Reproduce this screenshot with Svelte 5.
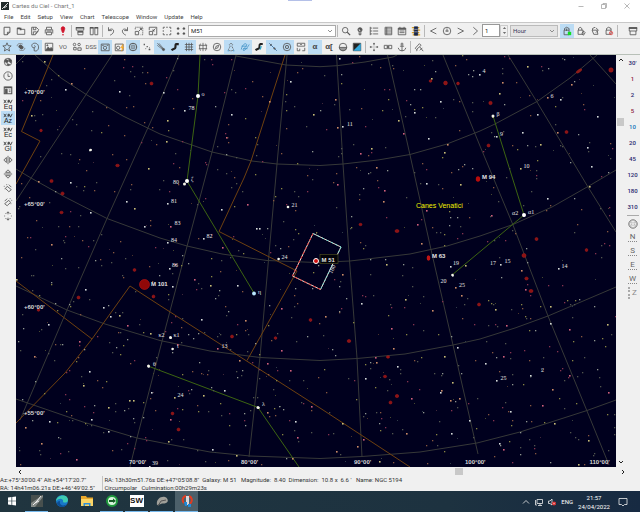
<script>
  const menus = ['File', 'Edit', 'Setup', 'View', 'Chart', 'Telescope', 'Window', 'Update', 'Help'];

  // Line icons on a 12 x 12 grid, drawn with the current colour.
  const icons = {
    page: '<path d="M2.5 1.5h7v6l-3 3h-4zM9.5 7.5h-3v3" stroke-width="1.1"/>',
    open: '<path d="M1.5 10V2.5h3.5l1 1.5h4.5v6z"/><path d="M1.5 3h4v2" stroke-width="2"/>',
    save: '<path d="M2 1.5h5.500l3 3-4 6H2zM4 1.500v3h3v-3M4 10.500v-3.500h4M6 10l4-4"/>',
    print: '<path d="M3 4V1.500h6V4M1.500 9V4.500h9V9M3 7.500h6v3H3zM3 6h6"/>',
    alert: '<path d="M6 1C3.500 1 3.500 3.500 4.500 5.500 5 7 5 8 6 8s1-1 1.500-2.500C8.500 3.500 8.500 1 6 1z" fill="#d0142c" stroke="#d0142c"/><circle cx="6" cy="10.500" r="1" fill="#d0142c" stroke="none"/>',
    tileh: '<path d="M1.500 2v3h9V2zM3.500 7v3.500h6V7z"/><path d="M1 2h10M3 7h7" stroke-width="1.800"/>',
    tilev: '<path d="M1.500 2v8.500H5V2zM7 2v8.500h3.500V2z"/><path d="M1 2h4.500M6.500 2H11" stroke-width="1.800"/>',
    undo: '<path d="M3 1.500v4h4M3 5.500C6 2 10 4 9 7c-.500 2-2 3-4 4"/>',
    redo: '<path d="M9 1.500v4H5M9 5.500C6 2 2 4 3 7c.500 2 2 3 4 4"/>',
    zoomin: '<path d="M1.500 4V1.500h9v9H8" stroke-dasharray="1.500 1"/><path d="M1.500 6.500h4v4h-4zM6 6l3-3M7 3h2v2"/>',
    zoomout: '<path d="M1.500 5V1.500h9v9H7"/><path d="M1.500 6.500h4v4h-4zM9 3L6 6M6 4v2h2"/>',
    select: '<path d="M3.500 1.500h-2v2M8.500 1.500h2v2M1.500 8.500v2h2M10.500 8.500v2h-2M5 1.500h2M5 10.500h2M1.500 5v2M10.500 5v2"/>',
    field: '<path d="M1 3h3M2.500 1.500v3M8 3h3M9.500 1.500v3M1 9h3M2.500 7.500v3M8 9h3M9.500 7.500v3" stroke-width="1.500"/>',
    search: '<circle cx="5" cy="5" r="3.300"/><path d="M7.500 7.500L11 11" stroke-width="1.400"/>',
    bulb: '<circle cx="6" cy="4.500" r="2.500" fill="currentColor"/><path d="M5 7.500v3h2v-3" stroke-width="1.200"/><path d="M5 4l1 2" stroke="#fff"/>',
    tree: '<path d="M1.500 1v10M1.500 2.500h2M4.500 2.500H11M5 6h6M1.500 6H4M1.500 9.500H4M5 9.500h6"/>',
    list: '<path d="M2.500 1.500h8v9h-8zM2.500 3.500h8M2.500 6h8M2.500 8.500h8M4.500 1.500v9"/>',
    calendar: '<path d="M1.500 2.500h9v8h-9zM3.500 1v2M8.500 1v2M3 6h6M3 8h6"/><path d="M1.500 3.500h9" stroke-width="2"/>',
    obs: '<path d="M1 2h9M2 5h9M1 8h9M2 10.500h9" stroke="#e0a426" stroke-width="1.500"/><path d="M4 1h4v10H4z" fill="#17264d" stroke="#17264d"/><path d="M4 4h4M4 7h4" stroke="#aaa"/>',
    left: '<path d="M10 2.500L3 6l7 3.500"/>',
    right: '<path d="M2 2.500L9 6 2 9.500"/>',
    right2: '<path d="M4 1.500l5 4.500-5 4.500"/>',
    now: '<circle cx="6" cy="6" r="4.500"/><path d="M6 3v4M4 6h4"/>',
    mouseg: '<path d="M2.500 5h6v5.500h-6zM3 5V3l2.500-1.500L8.500 3v2M5.500 3v3"/><path d="M7 7h4v4H7z" fill="#10e020" stroke="none"/>',
    mouse1: '<path d="M2.500 5h6v5h-6zM3 5V3l2-1.500L7 3v2M9 6l2 2-2 3-2-2z"/>',
    mouse2: '<path d="M2.500 5h6l1 5h-5zM3 5V3l3-1.500M7 2l3 3-3 3"/>',
    mouse3: '<path d="M2.500 5h6v5h-6zM3 5V3l2.500-1.500L8.500 3v2"/><circle cx="8.500" cy="8.500" r="2" stroke="#e05050"/><path d="M7.500 9.500l2-2" stroke="#e05050"/>',
    win: '<path d="M1.500 2v4h9V2zM2.500 6v4.500h7V6"/><path d="M1 2.500h10" stroke-width="2"/>',
    star: '<path d="M6 1l1.400 3.400 3.600.300-2.800 2.400.900 3.700L6 8.800 2.900 10.800l.900-3.700L1 4.700l3.600-.300z"/>',
    galaxy: '<ellipse cx="6" cy="6" rx="2.800" ry="2" transform="rotate(35 6 6)" fill="currentColor"/><path d="M1.500 5C1 2 5 1 8 2.500M10.500 7c.500 3-3.500 4-6.500 2.500" stroke="#777"/>',
    nebula: '<path d="M5 10.500C9 12 11 8 10 4.500 9 1 4 .500 2.500 3 1.500 5 2.500 7 5 7c2-.500 1.500-3 0-2.500M5 7v3.500"/>',
    image: '<path d="M1.500 1.500h9v9h-9z"/><path d="M2 10l3-4 2 2 1.500-1.500L10 8v2z" fill="currentColor"/><circle cx="4" cy="4" r=".700" fill="currentColor"/>',
    shapes: '<circle cx="3" cy="3" r="1.500"/><circle cx="8.500" cy="3" r="1.500"/><path d="M2 6.500h3v3H2zM7 7h4v3H7z"/>',
    pic: '<path d="M1.500 2.500h9.500v8H1.500z"/><circle cx="6" cy="7" r="2"/><path d="M2.500 4h2M8 4h2"/>',
    picflash: '<path d="M1.500 2.500h9.500v8H1.500z"/><circle cx="5" cy="7" r="2"/><path d="M10.500 3L8 7h2l-1 4 3-5h-2l1-3z" fill="#f5a623" stroke="#f5a623" stroke-width=".500"/>',
    rings: '<circle cx="6" cy="6" r="4.500" stroke-width="1.200"/><circle cx="6" cy="6" r="2.300" stroke-width=".800"/><circle cx="6" cy="6" r=".800" fill="currentColor" stroke="none"/>',
    dots: '<path d="M2 3h1.500M5.500 5.500H7M8 9h2" stroke-width="1.600"/><path d="M4 8h1M8.500 7h1" stroke-width="1"/>',
    comet: '<path d="M1.500 1.500l7 7M3.500 1.500L9 8M1.500 4L8 9" stroke-width=".800"/><circle cx="9" cy="9" r="1.300" fill="currentColor"/>',
    milky: '<path d="M10.500 2.500H7.500c-2 1 0 3-1.500 5-1 1-3 1-4 2.500" stroke="#222" stroke-width="2.600"/>',
    milkyb: '<path d="M10.500 2.500H7.500c-2 1 0 3-1.500 5-1 1-3 1-4 2.500" stroke="#222" stroke-width="2.400"/><path d="M9 5c-1.500 1 0 2-2 4" stroke="#28a5c7" stroke-width="1.500"/>',
    grid: '<path d="M3 1v10M6 1v10M9 1v10M1 3h10M1 6h10M1 9h10" stroke-width=".900"/>',
    globe: '<path d="M6 1v10M3 2C1.500 5 1.500 7 3 10.500M9 2c1.500 3 1.500 5 0 8.500M1 4h10M1 8h10" stroke-width=".900"/>',
    compass: '<circle cx="6" cy="6" r="4.500"/><path d="M8 4L5 5 4 8l3-1z"/>',
    figure: '<path d="M6 1.500L8 3 7 5 9 9 7.500 10.500h-3L3 9l2-4-1-2z" stroke-dasharray="1.300 .700"/><path d="M2 10.500h1.500M8.500 10.500H10" stroke="#2580b5"/>',
    draw: '<path d="M1.500 9C3 2 7 1 8 3S2 9 4 10s6-5 7-7M2 5h6M4 8h5" stroke="#4192c7"/>',
    conline: '<path d="M1.500 1.500l9 9" stroke="#369"/><path d="M3 3l1 1M7 7l1.500 1.500" stroke-width="2.200"/>',
    target: '<circle cx="6" cy="6" r="4.500"/><circle cx="6" cy="6" r="2"/><path d="M6 5.500v1"/>',
    frames: '<path d="M1.500 5V1.500h9V5zM1.500 7v3.500h3V8M10.500 7v3.500h-3M5 3h2"/>',
    horizon: '<circle cx="6" cy="6" r="4.500"/><path d="M1.500 6.500h9C10 9 8 10.500 6 10.500S2 9 1.500 6.500z" fill="#999"/>',
    night: '<path d="M1.500 1.500h9v9h-9z" fill="#222"/><path d="M10.500 1.500v9h-9z" fill="#35a9dc" stroke="none"/>',
    center: '<path d="M6 1v3M6 8v3M1 6h3M8 6h3M5 2h2M5 10h2M2 5v2M10 5v2M5.500 6h1"/>',
    link: '<path d="M1.500 4h4v4h-4zM6.500 4h4v4h-4zM4 6h4"/>',
    anchor: '<circle cx="6" cy="2.500" r="1.200"/><path d="M6 4v7M3.500 5h5M1.500 7c.500 3 3 3.500 4.500 3.500S10 10 10.500 7"/>',
    scope: '<path d="M1.500 7.500l5-5.500 2 2-5.500 5zM4 9l-1 2M7 6l4 5M7 10l3-3"/>',
    world: '<circle cx="6" cy="6" r="4.500"/><path d="M3 3l3 1v2L4 7 2 5zM7 2l3 2-1 3-2-2zM5 8l3 1-2 1z" fill="currentColor"/>',
    clock: '<circle cx="6" cy="6" r="5"/><path d="M6 3v3.500h2.500"/>',
    panel: '<path d="M1.500 2.500h9v8h-9z" stroke-width="1.300"/><path d="M2 3h8" stroke-width="1.800"/><path d="M3 5h2v5H3z" fill="currentColor"/><path d="M7 6h2M7 8h2"/>',
    fliph: '<path d="M6 1v10M4 3L1 6l3 3zM8 3l3 3-3 3z"/>',
    flipv: '<path d="M1 6h10M3 4l3-3 3 3zM3 8l3 3 3-3z"/>',
    rotl: '<path d="M5 4l5 4-3 2.500-4-4zM7 2l3 3" /><path d="M1 4h1M2 7h1M4 2h1"/>',
    rotr: '<path d="M7 4L2 8l3 2.500 4-4zM5 2L2 5"/><path d="M10 4h1M9 8h1M8 2h1"/>',
    rot: '<path d="M6 1v3M6 8v3M1.500 6h1M9.500 6h1M3 3h1M8 3h1M3 9h1M8 9h1M4.500 2.500L6 1l1.500 1.500M4.500 9.500L6 11l1.500-1.500"/>',
    disc: '<circle cx="6" cy="6" r="5"/><path d="M2.500 4h7M1.500 6h9M2.500 8h7M4 2v8M8 2v8" stroke="#aaa" stroke-dasharray="1 1"/>'
  };

  const bar1a = ['page', 'open', 'save', 'print', 'alert', '|', 'tileh', 'tilev', '|', 'undo', 'redo', 'zoomin', 'zoomout', 'select', 'field'];
  const bar1b = ['search', 'bulb', 'tree', 'list', 'calendar', 'obs', '|', 'left', 'now', 'right', 'right2'];
  const bar1c = ['mouseg*', 'mouse1', 'mouse2', 'mouse3', '|'];
  const bar2 = ['star*', 'galaxy*', 'nebula*', 'image', '=VO', 'shapes', '=DSS', 'pic*', 'picflash', 'rings*', 'dots', 'comet*', 'milky*', 'grid*', 'globe', 'compass', 'figure*', 'draw*', 'milkyb', 'conline*', 'target*', 'frames', '=α*', '=α[', 'horizon', 'night', '|', 'center', 'link', 'anchor', '|', 'scope'];
  const leftBar = ['world', 'clock', 'panel', '=Eq', '=Az*', '=Ec', '=Gl', 'fliph', 'flipv', 'rotl', 'rotr', 'rot'];
  const fields = ["30'", '1', '2', '5', '10', '20', '45', '120', '180', '310'];

  // Star catalogue by tile: origin, then x,y in thirds of a pixel with a
  // colour letter (upper case = brighter).
  const tiles = [
    [0, 54, '133,23Y 252,42o 370,40p 427,38g 443,55o 391,53g 428,55g 155,77g 215,88O 195,107W 138,95g 175,64y 344,80g 437,87o 358,113W 389,123g 66,139p 120,139o 94,184Y 103,185g 105,198g 126,181g 171,226g 216,195g 229,210g 272,287W 267,289w 276,173g 320,161o 303,234y 275,229g 325,213o 378,161o 401,156o 434,205o 458,220o 372,243o 424,264p 469,270o 210,300g 184,299g 237,315o 258,350o 337,300o 378,317o 445,344Y 120,306g 116,382O 63,387o 210,384W 228,397g 166,413w 254,397y 250,410g 282,410o 290,385g 342,412o 394,392o 390,407g 477,406g 380,443W 403,462Y 87,431o 147,445g 57,457g 56,464g 271,475W 210,473p 240,485g 450,500o 432,516W 450,515o 465,579p 110,500o 174,516g 208,517o 235,518g 303,541g 248,558o 280,560g 195,548p 190,558g 194,564g 155,570O 90,549p 82,551o 105,585g 264,578p 360,562o 341,596o 66,22g 372,16o 398,38p 404,67g'],
    [160, 54, '51,13w 134,15g 155,17p 157,30p 214,15p 20,70p 41,50g 9,116W 53,106p 97,132o 39,164o 21,199Y 24,228y 18,261Y 73,169W 167,157w 213,180W 193,115p 214,107g 225,115g 255,102p 278,82o 307,127o 327,142O 391,82W 411,54o 427,42o 378,120y 377,143g 380,170y 403,156g 459,180Y 438,218g 379,222o 458,291w 363,297o 306,323p 411,329y 287,250y 293,270g 257,194y 206,210o 198,250P 203,250o 195,238p 204,264o 289,303g 228,311g 199,302w 171,277g 137,324p 138,330p 41,327p 47,299g 58,340o 10,380g 66,262p 184,467W 213,400g 222,456y 246,412g 262,452P 289,524W 297,522W 321,524w 345,428y 341,440o 404,413g 416,427g 365,404y 443,412p 380,451p 406,468o 22,448W 32,516P 22,566W 130,554W 114,553o 154,540p 188,581P 220,548p 250,598y 235,590g 362,582w 401,555g 406,527y 414,538y 470,535y 371,502g 385,577o 346,573g 330,594p 456,377g 442,364o 285,362y 224,370o 229,389g 200,357g 172,345g 135,432p 54,390o 112,451g 28,413p'],
    [320, 54, '57,12W 117,7o 97,24p 64,60w 65,87y 45,136O 44,152g 12,65g 88,166g 124,163o 1,169w 68,218W 51,221O 18,227p 63,283g 137,218p 155,30g 180,41o 217,35g 220,43o 192,107p 208,105p 204,137y 188,170y 234,200Y 256,186g 249,237P 258,140p 270,150w 284,105w 302,105w 284,165y 282,176W 306,159y 346,191g 335,74Y 345,51w 336,20g 407,33o 427,5y 438,15o 460,50w 477,60W 445,60w 458,68w 361,143W 401,137g 417,141o 458,144g 457,173g 417,230o 326,254W 382,271O 374,294Y 368,311y 395,355o 415,346w 427,337o 433,332w 456,344w 101,272g 154,283Y 155,295p 146,304o 121,299P 64,298g 56,306g 197,281g 170,341O 110,340o 152,355g 146,359w 203,348w 50,358o 51,390P 39,386o 49,460g 118,420g 129,402w 172,379o 174,400p 194,410P 189,443O 119,437o 93,488w 94,519y 90,523g 122,566o 135,575g 130,583y 200,490p 293,510P 305,568O 360,535g 337,520o 309,458g 319,470P 301,388g 318,387W 282,356g 308,328o 319,345p 420,391Y 355,391g 366,402o 387,471y 390,489w 413,490w 448,491o 422,518g 389,515w 426,538p 349,536g 374,541y 411,552p 373,575y 305,497p 258,430g'],
    [480, 54, '72,7p 88,12p 143,38Y 183,36p 186,48g 246,12g 252,17w 204,42w 68,42g 67,86O 67,58g 109,86o 57,118Y 72,150w 38,186Y 50,247W 44,247w 128,234W 70,233g 149,125o 151,183o 173,181W 201,131O 240,136W 246,130g 225,157y 274,90O 284,83w 309,150o 312,167p 353,187W 225,212g 231,235O 180,271Y 165,277g 141,274w 240,273g 248,278g 295,240w 328,266g 390,267o 398,283p 322,281W 325,292g 271,326w 335,336W 392,314g 173,320y 169,348g 170,364p 170,374g 120,343Y 88,342g 78,370g 113,285y 98,274o 11,293p 34,236g 39,400o 35,484P 55,443g 31,488g 131,453g 154,413g 201,433W 282,433w 211,455o 200,470o 304,465o 327,398Y 386,355w 365,366p 388,460p 361,464g 387,485p 131,483W 170,555g 97,528g 107,539o 76,560p 291,510o 284,535g 381,531o 374,567p 364,575g 387,575p 346,597p 140,583w 42,560g 21,562p'],
    [0, 254, '65,10o 185,12w 197,43g 99,64g 94,65g 235,40g 286,20w 300,15o 304,35g 334,26g 376,14g 449,37o 477,64w 456,83o 407,111g 458,128p 367,63g 370,70o 50,75Y 97,110g 117,124y 154,84w 155,92y 255,106W 269,135g 209,151w 210,158y 219,143g 166,148w 172,170y 240,180o 310,160W 324,155w 332,188W 358,185Y 381,215P 368,176g 347,176g 452,238Y 383,256w 430,236y 417,211g 361,234g 355,234o 348,281w 328,266g 336,295g 362,301y 371,274y 402,318p 392,328o 446,336W 469,310g 291,247p 237,262P 238,274p 253,287w 235,310o 165,272o 180,271g 188,270w 146,212W 146,297g 69,222w 123,226g 66,182g 56,261w 60,289g 102,308O 162,319g 200,354p 209,350p 230,323y 292,379o 269,352W 243,366g 308,399o 318,383y 250,395Y 107,381w 133,418y 66,437w 75,519O 69,478g 98,498w 149,503W 172,505y 213,485o 217,500g 197,420p 209,435p 200,472y 252,458p 284,454w 281,474p 273,496W 274,514g 255,508y 326,532W 310,536g 325,461Y 345,471g 347,448g 374,468w 388,440Y 400,440Y 384,462g 430,445y 453,416W 450,433o 467,470o 430,491w 401,492w 402,504g 390,547w 437,551p 440,560p 176,549w 180,553g 124,569O 57,589g 118,590g 120,600g 180,597p 206,593g 230,616P 337,589o 363,587g 382,567p 402,582p 60,630o 447,638W'],
    [160, 254, '28,42W 36,57g 37,98W 24,121y 25,137g 68,3w 63,34y 46,32P 86,28w 103,77P 114,88g 124,104g 109,106p 155,12y 184,18g 211,10g 181,52o 153,68y 151,95Y 177,110w 175,123g 167,134w 233,95W 248,111o 281,118W 196,157o 205,172w 200,184g 125,195W 47,188p 67,192g 33,204p 65,220o 32,250W 17,231p 52,270P 38,284W 37,296w 64,265g 84,240w 101,254w 114,238w 132,234g 171,248g 181,240g 228,242y 215,248p 255,200O 255,230o 232,212p 264,242g 262,293g 287,268w 173,284P 210,287g 237,320O 325,213y 327,155w 407,103w 404,123o 365,163P 413,149o 458,104w 460,55y 476,35w 402,158g 393,191g 450,199p 478,208o 441,247w 410,262g 352,239g 334,260o 347,252p 365,290P 298,302y 277,325p 322,328P 351,349p 390,348P 387,378g 341,407g 430,378g 350,379y 475,371o 299,346p 324,360o 297,372g 247,350w 230,351g 243,363g 232,371w 117,324w 98,352o 125,358o 141,361o 146,350g 68,360y 155,400w 160,410g 193,408W 130,425Y 180,447y 94,407w 86,408p 88,418g 43,430Y 52,464p 30,495P 66,465y 111,453o 115,473y 145,471g 184,485g 207,478p 254,477w 254,500p 293,430g 279,430g 270,470g 322,474O 342,462y 358,457w 371,465w 453,457P 453,470o 423,445g 429,447p 345,483o 329,488o 387,500p 406,502W 404,529g 412,550P 366,540y 454,535g 415,562g 26,563Y 33,556g 70,555g 156,585W 112,590g 230,603Y 209,570g 207,515y 257,514w 294,460W 380,612w 396,612O 355,14W 22,620g 135,622g 205,620o 305,632o'],
    [320, 254, '66,60O 58,98w 15,186O 60,83g 43,75p 78,132w 63,163p 58,175o 57,173w 124,147W 127,125p 137,126p 160,125g 152,62g 151,16w 197,15w 198,30Y 250,32w 247,65g 213,160p 210,152g 255,137Y 252,161p 204,183y 280,212p 215,222P 258,242y 219,283O 311,228g 356,240y 338,169O 368,143p 310,127g 276,41g 277,96g 407,100O 390,36W 424,124O 432,150g 442,133g 428,193o 436,33Y 397,65W 463,212p 395,248w 413,279W 101,206y 9,243g 38,286w 47,305w 12,345y 20,414o 84,374g 102,378p 137,374W 170,325O 151,325w 150,342g 136,331y 167,310P 232,336W 283,318o 305,310y 291,322g 208,375g 240,358g 242,345g 262,382p 297,407p 366,357w 365,410O 360,415W 364,364g 344,358g 374,307Y 396,385Y 424,359w 415,335g 275,432P 166,400y 202,410g 309,476w 183,494p 179,507w 137,478w 129,487g 170,475g 180,475o 109,437y 29,474g 24,540p 40,538g 66,508Y 50,593O 61,601g 113,576O 130,557P 197,520p 180,528y 258,537O 216,537g 247,525g 318,574o 350,540y 390,440O 407,442w 419,434O 411,460g 393,469p 447,500W 394,538W 357,501g 353,573g 373,592y 336,560o 445,449p 465,320o 472,433g 469,524y 460,550g 220,625o 177,622Y 321,628o'],
    [480, 254, '57,9g 62,30W 63,70w 125,50O 143,26w 137,105P 150,123p 123,150y 143,90p 363,10g 234,44W 204,95p 210,156Y 180,158y 248,94p 262,140y 272,152g 283,150g 285,140y 297,135w 254,144p 342,158w 278,191g 26,140y 35,147y 40,150g 47,165Y 93,166g 26,213g 47,212p 52,216g 80,214P 127,164o 136,186y 138,192g 152,192o 166,228w 147,228y 210,208W 269,226P 305,246o 281,263y 344,258w 367,252y 383,210Y 406,187p 377,277y 393,240g 16,327W 36,294o 48,310w 59,352o 71,308P 90,313g 97,362g 92,294p 77,267g 19,262g 189,310g 149,320o 134,288p 207,276p 233,293p 152,365W 150,366w 185,347g 216,405O 242,350p 246,343p 254,378g 265,370p 267,365P 291,366g 278,320y 313,310g 307,354g 353,345w 357,369g 362,397g 385,415P 383,480y 402,482g 403,520g 404,540g 386,588g 288,447y 252,463g 237,433y 187,454P 151,454o 192,504y 153,503o 138,501w 131,392y 85,472o 92,472W 97,390w 77,446g 66,460p 98,500o 94,513y 40,500p 24,480o 50,378W 57,569W 69,586P 62,573w 88,563y 121,535w 162,575g 163,583p 167,597o 120,580g 120,600w 147,555g 96,625p 44,608o 222,508Y 270,536g 285,550g 325,559Y 324,543o 343,598g 294,555g 296,630Y 312,632o 341,604g 383,628p 212,624w']
  ];
  const tint = { w: '#8f9690', y: '#878444', p: '#84334f', o: '#865640', g: '#50544e', W: '#d4dada', Y: '#c8bd78', P: '#d0607c', O: '#cc8c68' };
  const stars = tiles.flatMap(([ox, oy, s]) =>
    s.split(' ').map((e) => {
      const k = e.slice(-1);
      const [x, y] = e.slice(0, -1).split(',').map(Number);
      return { x: Math.round(ox + x / 3 - 0.5), y: Math.round(oy + y / 3 - 0.5), c: tint[k], s: k < 'a' ? 1.6 : 1.3 };
    })
  );

  // Faint background stars.
  let seed = 4711;
  const rnd = () => ((seed = (seed * 16807) % 2147483647) / 2147483647);
  const faint = Array.from({ length: 140 }, () => ({
    x: 17 + Math.floor(rnd() * 598),
    y: 56 + Math.floor(rnd() * 409),
    c: ['#3c423e', '#4c352e', '#40283a', '#484a30', '#303c48'][Math.floor(rnd() * 5)]
  }));

  const grid = [
    [236, 56, 286, 65, 320, 66.700, 337, 65.700, 365, 62, 393, 57, 397, 55],
    [35, 55, 61, 78, 87, 95, 123, 116, 160, 134, 212, 152, 252, 161, 277, 164, 320, 165.500, 343, 164, 378, 160, 410, 154.500, 447, 144, 480, 131, 495, 124, 537, 101.500, 570, 78, 597, 55],
    [16, 169, 31, 178, 65, 197, 107, 218.500, 160, 238, 187, 246, 222, 254, 267, 260.500, 316, 262.500, 350, 261, 410, 254, 447, 246, 480, 236, 513, 224.500, 552, 207, 588, 186.500, 616, 170],
    [16, 286, 67, 310, 105, 324, 160, 340.500, 210, 351, 260, 357.500, 320, 360.500, 357, 358.500, 405, 354, 453, 345, 480, 339, 515, 328, 548, 316, 616, 287],
    [16, 399, 83, 422, 137, 438, 160, 442.500, 210, 452, 250, 456, 320, 458.500, 362, 456.500, 420, 452, 477, 443, 520, 432, 587, 410.500, 616, 400],
    [112, 55, 16, 201], [25, 55, 16, 64],
    [179, 55, 160, 101, 107, 218.500, 67, 310, 20, 420],
    [236, 55, 212, 152, 185, 254, 160, 349, 137, 438, 130, 467],
    [287, 55, 277, 164, 269, 254, 260, 357, 249, 457],
    [336.500, 55, 343, 164, 349, 254, 357, 358, 362, 457],
    [387.500, 55, 410, 155, 432, 254, 453, 345, 478, 454],
    [443, 55, 480, 146, 513, 225, 548, 316, 587, 411, 609, 465],
    [508, 55, 537, 102, 588, 187, 616, 232], [590, 55, 616, 84]
  ];
  const bounds = [
    [53, 55, 21.500, 131.500, 40, 141, 16, 184],
    [285, 55, 251, 161, 244, 178, 219, 231.500, 297, 271, 247, 360.500],
    [16, 281, 92, 339],
    [16, 423, 65, 373, 92, 339, 130, 286, 160, 305.500, 320, 408, 410, 467]
  ];
  const figures = [
    [200, 55, 198, 96, 187, 181, 254, 293],
    [148, 366, 258, 407.500, 299, 467],
    [493, 116, 524, 215, 452, 275]
  ];
  const bright = [[198, 96, 2], [187, 181, 2], [184.500, 184, 1.500], [148.500, 366, 1.500], [258, 407.500, 1.500], [493, 116, 1.500], [524, 215, 2], [452.500, 275, 1.300], [278.500, 259, 1.200], [90.500, 150, 1.300], [170.500, 337.500, 1.500], [172.500, 349, 1.200], [288, 207, 1.300]];
  const nebulae = [[151.500, 83.500, 1.500, 1.500], [41, 130.500, 1.300, 1.300], [117.500, 165.500, 1.800, 1.300], [51.500, 181, 1.600, 1.600], [62.500, 193.500, 1.600, 1.600], [61.500, 212.500, 1.600, 1.300], [445.500, 83, 1.900, 1.900], [430.500, 81, 1.300, 1.300], [458, 83.500, 1.400, 1.400], [397, 231, 2, 1.500], [360.500, 224.500, 1.500, 1.200], [611, 70, 2.200, 2.200], [490.500, 103, 1.700, 1.700], [488.500, 145.500, 1.500, 1.500], [566.500, 132, 1.500, 1.500], [536.500, 239, 1.500, 1.500], [586.500, 250, 1.300, 1.500], [524, 255.500, 2, 2], [526.500, 278.500, 1.700, 1.500], [531, 291, 2, 1.600], [134.500, 270, 1.400, 1.400], [78.500, 297.500, 1.500, 1.500], [38.500, 310, 1.300, 1.300], [153.500, 296.500, 1.400, 1.500], [310.500, 320, 1.400, 1.400], [232, 336.500, 1.500, 1.500], [275.500, 338, 1.300, 1.300], [349, 341, 1.800, 1.500], [385, 376.500, 1.600, 1.300], [390.500, 402.500, 1.500, 1.500], [397, 396, 1.700, 1.600], [172.500, 413.500, 1.400, 1.400], [178.500, 429.500, 1.500, 1.500], [479, 304.500, 1.500, 1.500], [388, 357, 1.600, 1.200]];
  const labels = [[201.500, 96, 'ο'], [188.500, 110, '78'], [173, 183.500, '80'], [191, 181, 'ζ'], [171, 203, '81'], [174.500, 225, '83'], [171, 242, '84'], [206.500, 238, '82'], [172, 267, '86'], [291.500, 207, '21'], [281.500, 258.500, '24'], [258, 294, 'η'], [347, 126, '11'], [482.500, 73, '4'], [550.500, 98, '6'], [496.500, 116, 'β'], [500, 136, '9'], [523.500, 168, '10'], [512, 215, 'α2'], [528, 214, 'α1'], [453, 265, '19'], [440.500, 282.500, '20'], [459, 287, '25'], [490, 264.500, '17'], [504.500, 262.500, '15'], [561.500, 268, '14'], [500.500, 380, '25'], [541, 372, '2'], [153, 366, 'θ'], [158.500, 337, 'κ2'], [173.500, 337, 'κ1'], [177, 348, 'ι'], [221.500, 348, '13'], [177.500, 397, '24'], [262, 406, 'λ'], [152, 465, '39']];
  const axis = [[24, 93.500, "+70°00'"], [24, 205.500, "+65°00'"], [24, 308.500, "+60°00'"], [24, 415, "+55°00'"], [129, 463.500, "70°00'"], [241, 463.500, "80°00'"], [354, 463.500, "90°00'"], [465, 463.500, "100°00'"], [589.500, 463.500, "110°00'"]];
</script>

{#snippet tool(id)}
  {@const on = id.endsWith('*')}
  {@const name = id.replace('*', '')}
  {#if name === '|'}
    <span class="sep"></span>
  {:else if name[0] === '='}
    <button class="tool word" class:on class:alpha={name[1] === 'α'}>{name.slice(1)}</button>
  {:else}
    <button class="tool" class:on aria-label={name}>
      <svg viewBox="0 0 12 12">{@html icons[name]}</svg>
    </button>
  {/if}
{/snippet}

<div class="window">
  <header class="title">
    <svg class="logo" viewBox="0 0 8 8"><rect width="8" height="8" fill="#222b2b" /><path d="M1 7l3-3 3-3M3 6l3-2" stroke="#ddd" fill="none" /></svg>
    <span>Cartes du Ciel - Chart_1</span>
    <i class="loading"></i>
    <div class="winbtns">
      <button aria-label="Minimize"><svg viewBox="0 0 6 6"><path d="M.500 3.500h5" /></svg></button>
      <button aria-label="Restore"><svg viewBox="0 0 6 6"><path d="M.500 1.500h4v4h-4zM2 1.500v-1h3.500v4h-1" /></svg></button>
      <button aria-label="Close"><svg viewBox="0 0 6 6"><path d="M.500.500l5 5M5.500.500l-5 5" /></svg></button>
    </div>
  </header>

  <nav class="menu">
    {#each menus as m}<button>{m}</button>{/each}
  </nav>

  <div class="bar">
    {#each bar1a as id}{@render tool(id)}{/each}
    <div class="combo">
      <input aria-label="Search object" value="M51" />
      <svg viewBox="0 0 6 6"><path d="M1 2l2 2 2-2" /></svg>
    </div>
    <span class="sep"></span>
    {#each bar1b as id}{@render tool(id)}{/each}
    <input class="step" aria-label="Time step" value="1" />
    <div class="spin">
      <button aria-label="Increase"><svg viewBox="0 0 6 4"><path d="M1 3l2-2 2 2z" /></svg></button>
      <button aria-label="Decrease"><svg viewBox="0 0 6 4"><path d="M1 1l2 2 2-2z" /></svg></button>
    </div>
    <div class="unit">
      <select aria-label="Time unit"><option>Hour</option><option>Day</option></select>
      <svg viewBox="0 0 6 6"><path d="M1 2l2 2 2-2" /></svg>
    </div>
    {#each bar1c as id}{@render tool(id)}{/each}
    <span class="grow"></span>
    {@render tool('win')}
  </div>

  <div class="bar second">
    {#each bar2 as id}{@render tool(id)}{/each}
  </div>

  <main>
    <aside class="left">
      {#each leftBar as id}
        {#if id[0] === '='}
          <button class="coord" class:on={id.endsWith('*')}>
            <svg viewBox="0 0 12 5"><path d="M1 .500l3 4M4 .500l-3 4M6 4.500l1-4 2 4 2-4M5 2h3" /></svg>
            <span>{id.slice(1).replace('*', '')}</span>
          </button>
        {:else}
          {@render tool(id)}
        {/if}
      {/each}
    </aside>

    <svg class="chart" viewBox="16 55 600 412" preserveAspectRatio="xMidYMid slice">
      <rect x="16" y="55" width="600" height="412" fill="#00001e" />
      {#each grid as p}<polyline points={p.join(' ')} stroke="#363838" />{/each}
      {#each bounds as p}<polyline points={p.join(' ')} stroke="#6e4010" />{/each}
      {#each figures as p}<polyline points={p.join(' ')} stroke="#3c6412" />{/each}
      {#each faint as s}<rect x={s.x} y={s.y} width="1" height="1" fill={s.c} />{/each}
      {#each stars as s}<rect x={s.x} y={s.y} width={s.s} height={s.s} fill={s.c} />{/each}
      {#each nebulae as [x, y, a, b]}<ellipse cx={x} cy={y} rx={a} ry={b} fill="#8c1414" stroke="#b01c1c" stroke-width=".5" />{/each}
      <ellipse cx="579" cy="71" rx="3.500" ry="1.500" transform="rotate(-35 579 71)" fill="#8c1c18" />
      <circle cx="144.500" cy="284.500" r="5" fill="#900808" stroke="#c01818" stroke-width=".6" />
      <ellipse cx="478" cy="179" rx="2.200" ry="2.700" fill="#b80c0c" />
      <ellipse cx="428.500" cy="258" rx="1.800" ry="2.800" fill="#c01414" />
      {#each bright as [x, y, r]}<circle cx={x} cy={y} {r} fill={r === 2 ? '#fff' : '#f4f4e8'} />{/each}
      <circle cx="254" cy="293.500" r="1.900" fill="#b8e6ff" />

      <polygon points="292.500,276 313,233.500 341,247 320.500,289.500" fill="none" stroke="#f0e4d4" />
      <polyline points="341,247 320.500,289.500" stroke="#70d8d0" stroke-dasharray="2 2" />
      <polyline points="313,233.500 341,247" stroke="#70d8d0" stroke-dasharray="2 3" />
      <polyline points="313,233.500 292.500,276 320.500,289.500" stroke="#e03030" stroke-dasharray="3 2" />
      <circle cx="316" cy="261" r="2.500" fill="#d01010" stroke="#fff" />
      <text class="star" x="332" y="274" transform="rotate(-65 332 274)">180</text>
      <rect x="320" y="254.500" width="18" height="9" fill="#020208" stroke="#555520" stroke-width=".6" />
      <text class="obj" x="321.500" y="261.500">M 51</text>

      {#each labels as [x, y, t]}<text class="star" {x} {y}>{t}</text>{/each}
      {#each axis as [x, y, t]}<text class="axis" {x} {y}>{t}</text>{/each}
      <text class="obj" x="151" y="286">M 101</text>
      <text class="obj" x="482" y="178.500">M 94</text>
      <text class="obj" x="432" y="257.500">M 63</text>
      <text class="name" x="416" y="208">Canes Venatici</text>
    </svg>

    <div class="vscroll">
      <svg viewBox="0 0 6 6"><path d="M1 4l2-2 2 2" /></svg>
      <i></i>
      <svg viewBox="0 0 6 6"><path d="M1 2l2 2 2-2" /></svg>
    </div>

    <aside class="right">
      {#each fields as f}<button class="fov" class:cyan={f === '10'} class:red={f === '1' || f === '5'}>{f}</button>{/each}
      <hr />
      {@render tool('disc')}
      {#each ['N', 'S', 'E', 'W'] as d}<button class="dir">{d}</button>{/each}
      <button class="zen">Z</button>
    </aside>
  </main>

  <div class="hscroll">
    <svg viewBox="0 0 6 6"><path d="M4 1L2 3l2 2" /></svg>
    <i></i>
    <svg viewBox="0 0 6 6"><path d="M2 1l2 2-2 2" /></svg>
  </div>

  <footer class="status">
    <div class="pos"><span>Az:+75°30'00.4" Alt:+54°17'20.7"</span><span>RA: 14h41m06.21s DE:+46°49'02.5"</span></div>
    <div class="info"><span>RA: 13h30m51.76s DE:+47°05'08.8"&nbsp; Galaxy: M 51&nbsp;&nbsp; Magnitude:&nbsp; 8.40&nbsp; Dimension:&nbsp; 10.8 x&nbsp; 6.6 '&nbsp;&nbsp; Name: NGC 5194</span><span>Circumpolar&nbsp;&nbsp; Culmination:00h29m23s</span></div>
  </footer>

  <div class="taskbar">
    <button aria-label="Start"><svg viewBox="0 0 12 12"><path d="M2 2.500l3.500-.500v3.700H2zM6.200 2L10 1.500v4.200H6.200zM2 6.300h3.500V10L2 9.500zM6.200 6.300H10v4.200L6.200 10z" fill="#fff" /></svg></button>
    <button class="run" aria-label="Chart"><svg viewBox="0 0 12 12"><rect width="12" height="12" fill="#48504e" /><path d="M0 12L0 8 12 0v2L4 12z" fill="#858b88" /><path d="M2 10l4-4 4-5M4 8l4-2" stroke="#eee" fill="none" /></svg></button>
    <button aria-label="Browser"><svg viewBox="0 0 12 12"><circle cx="6" cy="6" r="6" fill="#1878c8" /><path d="M0 6C0 0 12-2 12 5c0 3-4 3-5 2 1-3-3-5-7-1z" fill="#3ecbb0" /><path d="M4 6c-1 4 3 6 7 3-2 4-8 4-10 0 0-2 1-3 3-3z" fill="#0d4e94" /></svg></button>
    <button aria-label="Files"><svg viewBox="0 0 12 12"><path d="M0 1h5l1 1.500h6V11H0z" fill="#e9a92c" /><path d="M0 4h12v7H0z" fill="#fbd566" /><path d="M2.500 11V8h7v3H8V9.500H4V11z" fill="#2d8fd8" /></svg></button>
    <button class="run" aria-label="Updater"><svg viewBox="0 0 12 12"><circle cx="6" cy="6" r="5" fill="#d8f4dc" stroke="#1f9a3c" stroke-width="2" /><path d="M3 5h4V3.500L10 6 7 8V7H3z" fill="#155c25" /></svg></button>
    <button class="run sw">SW</button>
    <button class="run" aria-label="Moon"><svg viewBox="0 0 12 12"><path d="M1 10C0 5 4 1 9 2c3 1 4 5 1 6-2 1-4 0-5 1z" fill="#a0a09a" /><path d="M2 11l3-5 5-1" stroke="#555" fill="none" /></svg></button>
    <button class="run active" aria-label="Capture"><svg viewBox="0 0 12 12"><path d="M5 1C1 2 1 6 3 8M8 1c3 1 4 5 1 8" stroke="#e43b20" stroke-width="2" fill="none" /><path d="M5 1h3v9H5z" fill="#d7d7dc" /><path d="M3 7h3v4H4zM7 9h3v3H7z" fill="#1e88d8" /></svg></button>
    <span class="grow"></span>
    <div class="tray">
      <svg viewBox="0 0 8 8"><path d="M1 5.500l3-3 3 3" /></svg>
      <svg viewBox="0 0 8 8"><path d="M2 1.500h5.500v4H2zM3 7.500h4M5 5.500v2M.500 2v5H2" /></svg>
      <svg viewBox="0 0 8 8"><path d="M.500 3v2.500H2L4 7V1L2 3z" /><circle cx="6" cy="5.500" r="2" fill="#e02020" stroke="none" /><path d="M5 4.500l2 2M7 4.500l-2 2" stroke-width=".6" /></svg>
      <span>ENG</span>
      <div class="time"><span>21:57</span><span>24/04/2022</span></div>
      <svg class="note" viewBox="0 0 10 10"><path d="M1 1.500h8v6H6.500L5 9 3.500 7.500H1z" /></svg>
    </div>
  </div>
</div>

<style>
  :global(body) { margin: 0; background: #f0f0f0; }
  .window { display: flex; flex-direction: column; height: 100vh; overflow: hidden; font-family: Roboto, "Liberation Sans", sans-serif; font-size: 6px; line-height: 8px; color: #333; background: #f0f0f0; }
  button { border: 0; margin: 0; padding: 0; background: none; color: inherit; font: inherit; flex: none; }
  svg { display: block; flex: none; }
  .grow { flex: 1; }

  .title { display: flex; align-items: center; height: 11px; background: #fff; color: #777; position: relative; }
  .logo { width: 8px; height: 8px; margin: 0 3px 0 1px; }
  .loading { position: absolute; top: 0; left: 45%; width: 24px; height: 1px; background: #b4c0e8; }
  .winbtns { margin-left: auto; display: flex; gap: 17px; padding-right: 10px; }
  .winbtns svg { width: 6px; height: 6px; fill: none; stroke: #999; stroke-width: .7; }

  .menu { display: flex; gap: 7px; height: 11px; padding: 0 4px; background: #fff; align-items: center; color: #444; }

  .bar { display: flex; align-items: center; height: 16px; box-sizing: border-box; border-top: 1px solid #c8c8c8; }
  .bar.second { height: 17px; border-bottom: 1px solid #b8c0b8; }
  .tool { width: 14px; height: 14px; display: flex; align-items: center; justify-content: center; color: #555; }
  .tool svg { width: 10px; height: 10px; fill: none; stroke: currentColor; stroke-width: 1; }
  .on { background: #bcdcf4; }
  .word { color: #555; }
  .alpha { font: bold 8px "Liberation Sans", sans-serif; color: #444; }
  .sep { width: 1px; height: 12px; margin: 0 1px; background: #b8b8b8; flex: none; }
  .combo { flex: 0 1 148px; display: flex; align-items: center; height: 12px; border: 1px solid #aaa; background: #fff; box-sizing: border-box; min-width: 40px; }
  .combo input { flex: 1; min-width: 0; border: 0; padding: 0 2px; font: inherit; color: #222; background: none; }
  .combo svg, .unit svg { width: 6px; height: 6px; margin-right: 2px; fill: none; stroke: #777; stroke-width: .8; }
  .step { width: 18px; height: 13px; box-sizing: border-box; border: 1px solid #999; background: #fff; padding: 0 2px; font: inherit; color: #222; }
  .spin { display: flex; flex-direction: column; width: 8px; margin-right: 2px; border: 1px solid #ccc; box-sizing: border-box; }
  .spin button { height: 5px; display: flex; align-items: center; justify-content: center; }
  .spin svg { width: 5px; height: 4px; fill: #444; }
  .unit { display: flex; align-items: center; width: 48px; height: 12px; box-sizing: border-box; border: 1px solid #bbb; background: #e4e4e4; margin-right: 2px; }
  select { flex: 1; appearance: none; border: 0; padding: 0 2px; background: none; font: inherit; color: #335; }

  main { flex: 1; display: flex; min-height: 0; }
  .left { width: 16px; display: flex; flex-direction: column; align-items: center; }
  .coord { width: 14px; height: 14px; display: flex; flex-direction: column; align-items: center; justify-content: center; }
  .coord svg { width: 10px; height: 5px; fill: none; stroke: #333; stroke-width: 1; }
  .coord span { font: 7px/6px "Liberation Sans", sans-serif; color: #222; }
  .chart { flex: 1; min-width: 0; height: 100%; }
  .chart polyline { fill: none; stroke-width: 1; }
  .star { font: 6px "Liberation Serif", serif; fill: #e4e4e4; }
  .axis { font: bold 6px "Liberation Sans", sans-serif; fill: #d8d8d8; }
  .obj { font: bold 6px "Liberation Sans", sans-serif; fill: #e4e4e4; }
  .name { font: 7px "Liberation Sans", sans-serif; fill: #f0f000; }
  .vscroll { width: 9px; display: flex; flex-direction: column; align-items: center; padding: 2px 0; box-sizing: border-box; }
  .vscroll svg, .hscroll svg { width: 6px; height: 6px; fill: none; stroke: #222; }
  .vscroll i { width: 7px; height: 8px; margin: 55px 0 auto; background: #c8c8c8; }
  .right { width: 15px; display: flex; flex-direction: column; align-items: center; }
  .fov { height: 16px; font-weight: 500; color: #26266e; }
  .fov.cyan { color: #1070b8; }
  .fov.red { color: #8c2040; }
  hr { width: 12px; border: 0; border-top: 1px solid #aaa; margin: 0 0 1px; }
  .dir { width: 9px; height: 11px; margin-bottom: 3px; font-size: 8px; line-height: 9px; color: #666; border-bottom: 1px dotted #888; box-sizing: border-box; }
  .zen { height: 12px; padding-left: 2px; border-left: 2px dotted #aaa; font-size: 8px; color: #888; }

  .hscroll { display: flex; align-items: center; height: 9px; padding: 0 14px 0 17px; }
  .hscroll i { width: 8px; height: 7px; margin-left: 71%; margin-right: auto; background: #c8c8c8; }

  .status { display: flex; height: 15px; color: #333; white-space: nowrap; }
  .status div { display: flex; flex-direction: column; line-height: 8px; justify-content: center; }
  .pos { width: 16%; border-right: 1px solid #c4c4c4; }
  .info { padding-left: 1px; }

  .taskbar { display: flex; align-items: stretch; height: 21px; background: linear-gradient(90deg, #20353f, #1d3240 70%, #172a42); color: #fff; }
  .taskbar > button { width: 23px; margin-right: 2px; display: flex; align-items: center; justify-content: center; border-bottom: 1px solid transparent; box-sizing: border-box; }
  .taskbar > button svg { width: 12px; height: 12px; }
  .taskbar > .run { border-bottom-color: #76b9ed; }
  .taskbar > .active { background: #4c606a; }
  .taskbar > .sw { font: bold 8px/12px "Liberation Sans", sans-serif; color: #111; background: linear-gradient(#fff, #fff) center / 14px 12px no-repeat; }
  .tray { display: flex; align-items: center; gap: 5px; padding-right: 12px; }
  .tray svg { width: 8px; height: 8px; fill: none; stroke: #eee; stroke-width: .8; }
  .tray .note { width: 10px; height: 10px; }
  .time { display: flex; flex-direction: column; align-items: center; line-height: 9px; margin-right: 3px; }
</style>
